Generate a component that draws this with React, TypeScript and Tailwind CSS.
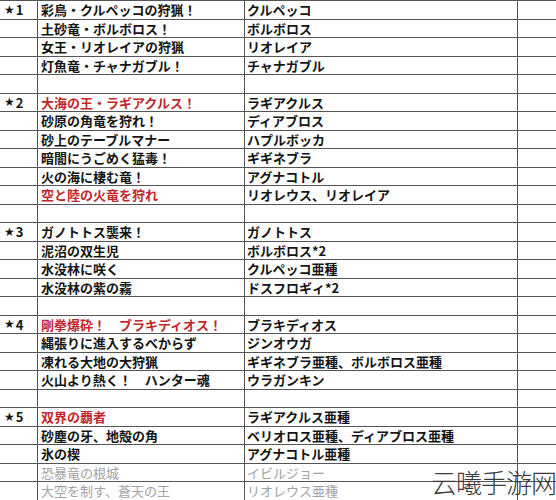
import React from "react";

type Row = {
  star?: string;
  quest?: string;
  monster?: string;
  tone?: "red" | "gray";
};

const rows: Row[] = [
  { star: "1", quest: "彩鳥・クルペッコの狩猟！", monster: "クルペッコ" },
  { quest: "土砂竜・ボルボロス！", monster: "ボルボロス" },
  { quest: "女王・リオレイアの狩猟", monster: "リオレイア" },
  { quest: "灯魚竜・チャナガブル！", monster: "チャナガブル" },
  {},
  { star: "2", quest: "大海の王・ラギアクルス！", monster: "ラギアクルス", tone: "red" },
  { quest: "砂原の角竜を狩れ！", monster: "ディアブロス" },
  { quest: "砂上のテーブルマナー", monster: "ハプルボッカ" },
  { quest: "暗闇にうごめく猛毒！", monster: "ギギネブラ" },
  { quest: "火の海に棲む竜！", monster: "アグナコトル" },
  { quest: "空と陸の火竜を狩れ", monster: "リオレウス、リオレイア", tone: "red" },
  {},
  { star: "3", quest: "ガノトトス襲来！", monster: "ガノトトス" },
  { quest: "泥沼の双生児", monster: "ボルボロス*2" },
  { quest: "水没林に咲く", monster: "クルペッコ亜種" },
  { quest: "水没林の紫の霧", monster: "ドスフロギィ*2" },
  {},
  { star: "4", quest: "剛拳爆砕！　ブラキディオス！", monster: "ブラキディオス", tone: "red" },
  { quest: "縄張りに進入するべからず", monster: "ジンオウガ" },
  { quest: "凍れる大地の大狩猟", monster: "ギギネブラ亜種、ボルボロス亜種" },
  { quest: "火山より熱く！　ハンター魂", monster: "ウラガンキン" },
  {},
  { star: "5", quest: "双界の覇者", monster: "ラギアクルス亜種", tone: "red" },
  { quest: "砂塵の牙、地殻の角", monster: "ベリオロス亜種、ディアブロス亜種" },
  { quest: "氷の楔", monster: "アグナコトル亜種" },
  { quest: "恐暴竜の根城", monster: "イビルジョー", tone: "gray" },
  { quest: "大空を制す、蒼天の王", monster: "リオレウス亜種", tone: "gray" },
];

export default function App() {
  return (
    <div className="relative w-[556px] h-[500px] overflow-hidden bg-white font-['Noto_Sans_CJK_JP',sans-serif] text-[13px] leading-none text-[#141414]">
      <div className="border-t border-[#555]">
        {rows.map((r, i) => {
          const gray = r.tone === "gray";
          const questColor =
            r.tone === "red" ? "text-[#c0282e]" : gray ? "text-[#a3a3a3]" : "";
          return (
            <div key={i} className="flex h-[18.5px] border-b border-[#555]">
              <div className="w-[38px] shrink-0 border-r border-[#555] pl-[4px] flex items-center font-bold">
                {r.star && (
                  <>
                    <span className="font-['DejaVu_Sans',sans-serif] text-[12px] mr-[1px]">★</span>
                    <span>{r.star}</span>
                  </>
                )}
              </div>
              <div
                className={`w-[207px] shrink-0 border-r border-[#555] pl-[3px] flex items-center whitespace-nowrap ${
                  gray ? "font-normal" : "font-bold"
                } ${questColor}`}
              >
                {r.quest}
              </div>
              <div
                className={`w-[273px] shrink-0 border-r border-[#555] pl-[2px] flex items-center whitespace-nowrap ${
                  gray ? "font-normal text-[#a3a3a3]" : "font-bold"
                }`}
              >
                {r.monster}
              </div>
              <div className="flex-1" />
            </div>
          );
        })}
      </div>

      {/* watermark */}
      <div className="absolute right-0 bottom-[5px] text-[26px] font-light leading-none text-[#3a3a3a] font-['Noto_Sans_CJK_SC',sans-serif] tracking-[-1px] whitespace-nowrap">
        云曦手游网
      </div>
    </div>
  );
}
